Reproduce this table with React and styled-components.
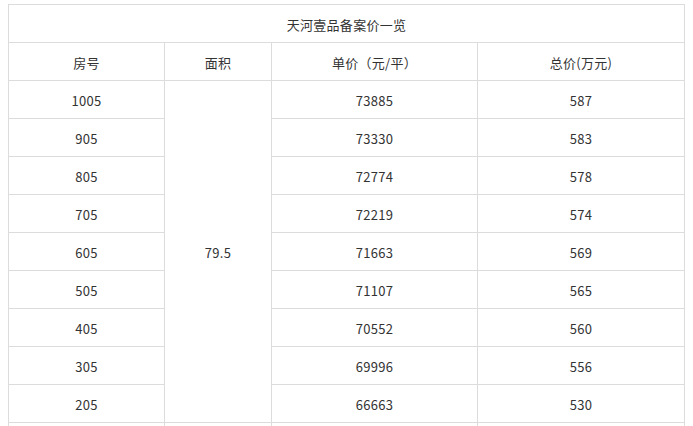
import React from 'react';
import styled, { createGlobalStyle } from 'styled-components';

const GlobalStyle = createGlobalStyle`
  html, body {
    margin: 0;
    padding: 0;
    background: #fff;
    overflow: hidden;
  }
  body {
    font-family: "Noto Sans CJK SC", "DejaVu Sans", sans-serif;
  }
`;

const Page = styled.div`
  padding: 4px 0 0 8px;
  width: 693px;
  height: 426px;
  box-sizing: border-box;
  overflow: hidden;
`;

const Table = styled.table`
  border-collapse: collapse;
  table-layout: fixed;
  width: 677px;
  font-size: 13px;
  color: #333;
`;

const Cell = styled.td`
  border: 1px solid #dcdcdc;
  height: 38px;
  padding: 2px 0 0;
  text-align: center;
  vertical-align: middle;
  line-height: 18px;
  letter-spacing: 0.3px;
  box-sizing: border-box;
`;

const rows = [
  ['1005', '73885', '587'],
  ['905', '73330', '583'],
  ['805', '72774', '578'],
  ['705', '72219', '574'],
  ['605', '71663', '569'],
  ['505', '71107', '565'],
  ['405', '70552', '560'],
  ['305', '69996', '556'],
  ['205', '66663', '530'],
];

const App = () => {
  return (
    <Page>
      <GlobalStyle />
      <Table>
        <colgroup>
          <col style={{ width: 156 }} />
          <col style={{ width: 107 }} />
          <col style={{ width: 206 }} />
          <col style={{ width: 207 }} />
        </colgroup>
        <tbody>
          <tr>
            <Cell colSpan={4}>天河壹品备案价一览</Cell>
          </tr>
          <tr>
            <Cell>房号</Cell>
            <Cell>面积</Cell>
            <Cell>单价（元/平）</Cell>
            <Cell>总价(万元)</Cell>
          </tr>
          {rows.map((r, i) => (
            <tr key={r[0]}>
              <Cell>{r[0]}</Cell>
              {i === 0 && <Cell rowSpan={rows.length}>79.5</Cell>}
              <Cell>{r[1]}</Cell>
              <Cell>{r[2]}</Cell>
            </tr>
          ))}
          <tr>
            <Cell />
            <Cell />
            <Cell />
            <Cell />
          </tr>
        </tbody>
      </Table>
    </Page>
  );
};

export default App;
